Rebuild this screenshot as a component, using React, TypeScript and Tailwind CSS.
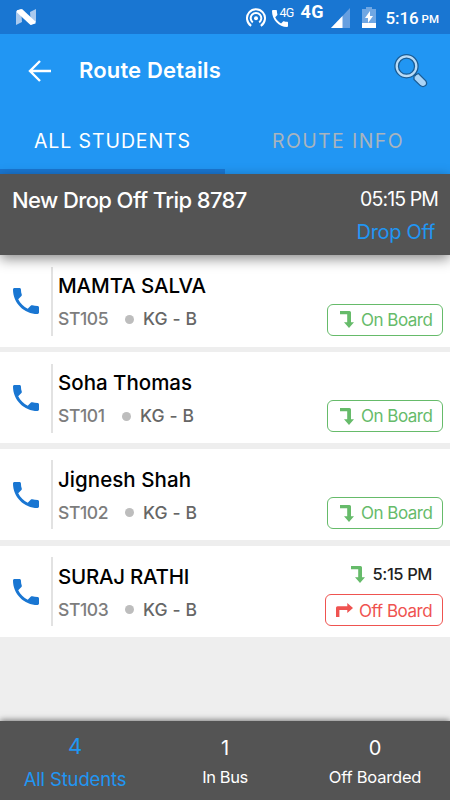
import clsx from 'clsx';

type Student = {
  id: string;
  name: string;
  nameClass: string;
  gapClass: string;
  grade: string;
  boardedAt?: string;
};

const students: Student[] = [
  { id: 'ST105', name: 'MAMTA SALVA', nameClass: 'tracking-[-0.1px]', gapClass: 'w-[71px]', grade: 'KG - B' },
  { id: 'ST101', name: 'Soha Thomas', nameClass: 'tracking-[0px]', gapClass: 'w-[68px]', grade: 'KG - B' },
  { id: 'ST102', name: 'Jignesh Shah', nameClass: 'tracking-[0.05px]', gapClass: 'w-[71px]', grade: 'KG - B' },
  {
    id: 'ST103',
    name: 'SURAJ RATHI',
    nameClass: 'tracking-[-0.25px]',
    gapClass: 'w-[71px]',
    grade: 'KG - B',
    boardedAt: '5:15 PM',
  },
];

function StatusBar() {
  return (
    <div className="flex h-[34px] shrink-0 items-center bg-[#1976d2] text-white">
      <svg className="ml-4 h-4 w-5" viewBox="0 0 20 16">
        <path d="M0 2 L5 0 L6 13 L0 16Z M14 3 L20 0 V13 L15 16Z" fill="#a9c9ee" />
        <path d="M1 1.2 L6 0 L19.5 12.5 V14.5 L14.5 16 L1 3.5Z" fill="#fff" />
      </svg>
      <div className="grow" />
      <svg className="mt-px mr-[6px] h-5 w-5" viewBox="0 0 20 20" fill="none" stroke="#fff" strokeWidth="2">
        <path d="M5.2 17.8 A9 9 0 1 1 14.8 17.8" />
        <path d="M6.8 14.4 A5.3 5.3 0 1 1 13.2 14.4" />
        <circle cx="10" cy="10.3" r="2" fill="#fff" stroke="none" />
      </svg>
      <div className="flex h-[18px] w-[29px]">
        <svg className="mt-[2px] h-[17px] w-[16px] shrink-0" viewBox="3 3 18 18" preserveAspectRatio="none" fill="#fff">
          <path d="M6.62 10.79c1.44 2.83 3.76 5.14 6.59 6.59l2.2-2.2c.27-.27.67-.36 1.02-.24 1.12.37 2.33.57 3.57.57.55 0 1 .45 1 1V20c0 .55-.45 1-1 1-9.39 0-17-7.61-17-17 0-.55.45-1 1-1h3.5c.55 0 1 .45 1 1 0 1.25.2 2.45.57 3.57.11.35.03.74-.25 1.02z" />
        </svg>
        <span className="-mt-px -ml-[8px] font-[Roboto] text-[12.5px] leading-[12px] tracking-[-0.8px]">4G</span>
      </div>
      <span className="mb-[10px] w-[30px] font-[Roboto] text-[18px] leading-[18px] font-bold tracking-[0.5px]">4G</span>
      <svg className="mt-[2px] h-5 w-[19px]" viewBox="0 0 19 20">
        <path d="M0 20 L19 0 V20Z" fill="#669fe0" />
        <path d="M0 20 L11.5 8 V20Z" fill="#fff" />
      </svg>
      <svg className="ml-3 h-[21px] w-[14px]" viewBox="0 0 14 21">
        <path d="M0 2 H4 V0 H10 V2 H14 V21 H0Z" fill="#70a7e3" />
        <path d="M0 16 H14 V21 H0Z M8 4 V9 H11 L6 16 V11 H3Z" fill="#fff" />
      </svg>
      <span className="mt-px ml-[10px] font-[Roboto] text-[17px] leading-5 font-medium tracking-[-0.1px]">5:16</span>
      <span className="mt-[4px] mr-[11px] ml-[3px] font-[Roboto] text-[11.5px] leading-4 font-medium">PM</span>
    </div>
  );
}

function SearchIcon() {
  return (
    <svg className="h-[34px] w-[34px]" viewBox="0 0 34 34">
      <path d="M20 21.5 L24.5 19.5 L31.8 26.8 Q33.6 29.5 31.5 31.6 Q29 33.6 26.3 31.6 L20 25.5Z" fill="#a9d4f7" stroke="#1b5c94" strokeWidth="1.3" />
      <path d="M18.5 18.5 L22 21.5" stroke="#1b5c94" strokeWidth="3" />
      <circle cx="12.5" cy="12.2" r="9.8" fill="none" stroke="#1b5c94" strokeWidth="4.8" />
      <circle cx="12.5" cy="12.2" r="9.8" fill="none" stroke="#b9dcf8" strokeWidth="2.3" />
    </svg>
  );
}

function DownTurn() {
  return (
    <svg className="h-[17px] w-[14px] shrink-0" viewBox="0 0 14 17" fill="#66bb6a">
      <path d="M0 0 H9.5 Q11 0 11 1.5 V11.3 H14 L9 17 L4 11.3 H7.2 V3.2 H0Z" />
    </svg>
  );
}

function RightTurn() {
  return (
    <svg className="h-[14px] w-[17px] shrink-0" viewBox="0 0 17 14" fill="#ef5350">
      <path d="M0 14 V4.8 Q0 3.2 1.6 3.2 H11.3 V0 L17 5 L11.3 10 V7 H3.4 V14Z" />
    </svg>
  );
}

function StudentRow({ data }: { data: Student }) {
  return (
    <li className="flex h-[91.4px] shrink-0 bg-white">
      <svg className="mt-[33px] ml-[13px] h-[26px] w-[26px]" viewBox="3 3 18 18" fill="#1976d2">
        <path d="M6.62 10.79c1.44 2.83 3.76 5.14 6.59 6.59l2.2-2.2c.27-.27.67-.36 1.02-.24 1.12.37 2.33.57 3.57.57.55 0 1 .45 1 1V20c0 .55-.45 1-1 1-9.39 0-17-7.61-17-17 0-.55.45-1 1-1h3.5c.55 0 1 .45 1 1 0 1.25.2 2.45.57 3.57.11.35.03.74-.25 1.02z" />
      </svg>
      <div className="mt-[11.5px] ml-3 h-[69px] w-[2px] bg-[#e2e2e2]" />
      <div className="mt-[19px] ml-[5px] grow">
        <div className={clsx('text-[20.5px] leading-6 font-medium whitespace-nowrap text-black', data.nameClass)}>
          {data.name}
        </div>
        <div className="mt-[10px] flex items-center text-[17.5px] leading-[22px] font-medium">
          <span className={clsx('tracking-[-0.4px] text-[#7d7d7d]', data.gapClass)}>{data.id}</span>
          <span className="-ml-1 h-[9px] w-[9px] rounded-full bg-[#bdbdbd]" />
          <span className="ml-[9px] tracking-[0.1px] text-[#666]">{data.grade}</span>
        </div>
      </div>
      <div className="mr-[7px] flex flex-col items-end justify-end pb-[11px]">
        {data.boardedAt ? (
          <>
            <div className="mr-[11px] mb-[10px] flex items-center gap-2">
              <DownTurn />
              <span className="text-[16.5px] leading-5 font-medium tracking-[-0.4px] text-[#222]">{data.boardedAt}</span>
            </div>
            <button className="flex h-8 w-[118px] items-center gap-[6px] rounded-[6px] border-[1.5px] border-[#ef5350] pl-[10px] text-[17px] leading-6 tracking-[-0.45px] whitespace-nowrap text-[#ef5350]">
              <RightTurn />
              <span className="pt-px">Off Board</span>
            </button>
          </>
        ) : (
          <button className="flex h-8 w-[116px] items-center gap-[7px] rounded-[6px] border-[1.5px] border-[#66bb6a] pl-[12px] text-[17px] leading-6 tracking-[-0.5px] whitespace-nowrap text-[#66bb6a]">
            <DownTurn />
            <span>On Board</span>
          </button>
        )}
      </div>
    </li>
  );
}

export default function App() {
  return (
    <main className="flex h-[800px] w-[450px] flex-col overflow-hidden bg-[#eee] font-[Inter,sans-serif]">
      <StatusBar />
      <header className="h-[140.3px] shrink-0 bg-[#2196f3] text-white">
        <div className="flex h-[73px] items-center pr-[22px] pl-7">
          <svg className="h-[22px] w-[23px]" viewBox="0 0 23 22" fill="none" stroke="#fff" strokeWidth="2.4">
            <path d="M12 1 L2 11 L12 21 M2 11 H23" />
          </svg>
          <h1 className="mb-[2px] ml-[28px] grow text-[22px] leading-7 font-semibold tracking-[0.15px]">Route Details</h1>
          <SearchIcon />
        </div>
        <nav className="flex h-[67.3px] text-center text-[19.5px] leading-[69px]">
          <div className="h-full w-[225px] border-b-[5.5px] border-[#1976d2] tracking-[0.9px]">ALL STUDENTS</div>
          <div className="w-[225px] pl-px tracking-[1.4px] text-[#a9b4bd]">ROUTE INFO</div>
        </nav>
      </header>
      <section className="relative flex h-[81px] shrink-0 justify-between bg-[#545454] pt-[12px] pr-3 pl-3 text-white shadow-[0_4px_12px_rgba(0,0,0,0.45)]">
        <h2 className="text-[22px] leading-7 font-medium tracking-[-0.6px]">New Drop Off Trip 8787</h2>
        <div className="pt-px text-right">
          <div className="text-[19.5px] leading-6 tracking-[-0.9px]">05:15 PM</div>
          <div className="mt-[9px] mr-[3px] text-[20px] leading-6 tracking-[-0.3px] text-[#2196f3]">Drop Off</div>
        </div>
      </section>
      <ul className="flex grow flex-col gap-[5.4px]">
        {students.map((student) => (
          <StudentRow key={student.id} data={student} />
        ))}
      </ul>
      <footer className="grid h-[79px] shrink-0 grid-cols-3 bg-[#545454] text-center text-white shadow-[0_-1px_6px_rgba(0,0,0,0.5)]">
        <div className="pt-[11px] text-[#2196f3]">
          <div className="text-[22px] leading-7">4</div>
          <div className="mt-[7px] text-[18.5px] leading-6 tracking-[-0.15px]">All Students</div>
        </div>
        <div className="pt-[13px]">
          <div className="text-[20px] leading-7">1</div>
          <div className="mt-[3px] text-[16.5px] leading-6 tracking-[-0.4px]">In Bus</div>
        </div>
        <div className="pt-[13px]">
          <div className="text-[20px] leading-7">0</div>
          <div className="mt-[3px] text-[16.5px] leading-6 tracking-[-0.2px]">Off Boarded</div>
        </div>
      </footer>
    </main>
  );
}
